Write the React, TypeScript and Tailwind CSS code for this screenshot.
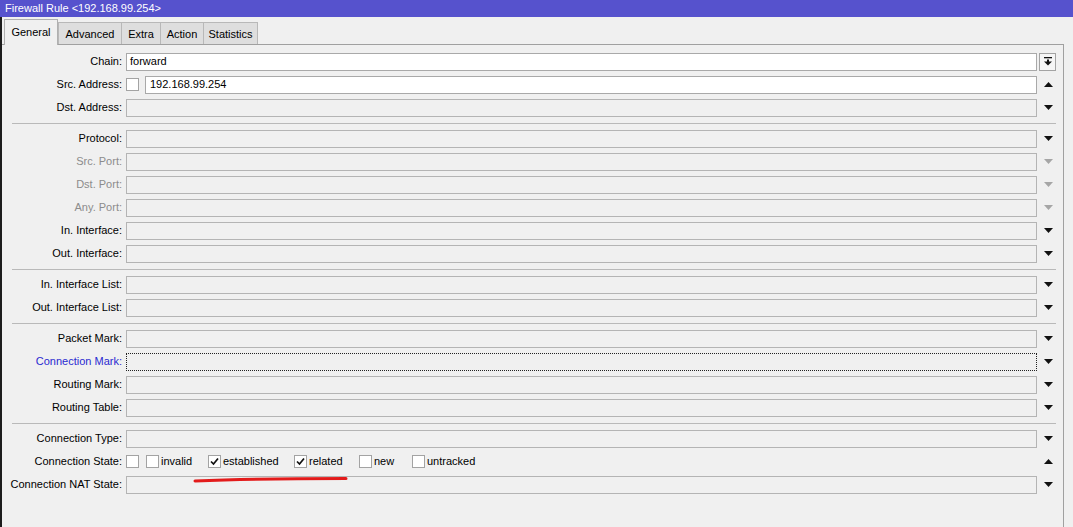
import React from "react";

type Field = {
  label: string;
  kind?: "input" | "white" | "src" | "focus" | "state";
  text?: string;
  arrow?: "down" | "up" | "grey" | "button";
  labelTone?: "normal" | "muted" | "blue";
};

const groups: Field[][] = [
  [
    { label: "Chain:", kind: "white", text: "forward", arrow: "button" },
    { label: "Src. Address:", kind: "src", text: "192.168.99.254", arrow: "up" },
    { label: "Dst. Address:", arrow: "down" },
  ],
  [
    { label: "Protocol:", arrow: "down" },
    { label: "Src. Port:", arrow: "grey", labelTone: "muted" },
    { label: "Dst. Port:", arrow: "grey", labelTone: "muted" },
    { label: "Any. Port:", arrow: "grey", labelTone: "muted" },
    { label: "In. Interface:", arrow: "down" },
    { label: "Out. Interface:", arrow: "down" },
  ],
  [
    { label: "In. Interface List:", arrow: "down" },
    { label: "Out. Interface List:", arrow: "down" },
  ],
  [
    { label: "Packet Mark:", arrow: "down" },
    { label: "Connection Mark:", kind: "focus", arrow: "down", labelTone: "blue" },
    { label: "Routing Mark:", arrow: "down" },
    { label: "Routing Table:", arrow: "down" },
  ],
  [
    { label: "Connection Type:", arrow: "down" },
    { label: "Connection State:", kind: "state", arrow: "up" },
    { label: "Connection NAT State:", arrow: "down" },
  ],
];

const states = [
  { name: "invalid", checked: false, w: "w-[62px]" },
  { name: "established", checked: true, w: "w-[86px]" },
  { name: "related", checked: true, w: "w-[65px]" },
  { name: "new", checked: false, w: "w-[53px]" },
  { name: "untracked", checked: false, w: "w-auto" },
];

const tabs = [
  { name: "Advanced", w: "w-[64px] border-l" },
  { name: "Extra", w: "w-[39px]" },
  { name: "Action", w: "w-[43px]" },
  { name: "Statistics", w: "w-[54px]" },
];

function Check({ checked }: { checked?: boolean }) {
  return (
    <span className="w-[13px] h-[13px] shrink-0 border border-[#a3a3a3] bg-white flex items-center justify-center">
      {checked && (
        <svg width="9" height="9" viewBox="0 0 9 9">
          <path d="M1 4.5 L3.5 7 L8 1.5" fill="none" stroke="#111" strokeWidth="1.7" />
        </svg>
      )}
    </span>
  );
}

function Arrow({ kind }: { kind?: Field["arrow"] }) {
  if (kind === "button") {
    return (
      <span className="ml-[2px] w-[17px] h-[18px] border border-[#a3a3a3] bg-[#f5f5f5] flex items-center justify-center">
        <svg width="8" height="9" viewBox="0 0 8 9">
          <rect x="0" y="0" width="8" height="1.3" fill="#111" />
          <rect x="3" y="2.5" width="2" height="2.5" fill="#111" />
          <polygon points="0,4.5 8,4.5 4,8.5" fill="#111" />
        </svg>
      </span>
    );
  }
  const up = kind === "up";
  const color = kind === "grey" ? "#a6a6a6" : "#111";
  return (
    <span className="pl-[7px] flex items-center">
      <svg width="9" height="5" viewBox="0 0 9 5">
        <polygon points={up ? "0,5 9,5 4.5,0" : "0,0 9,0 4.5,5"} fill={color} />
      </svg>
    </span>
  );
}

function Row({ f }: { f: Field }) {
  const tone =
    f.labelTone === "muted"
      ? "text-[#8c8c8c]"
      : f.labelTone === "blue"
      ? "text-[#2a2ad0]"
      : "text-black";
  const box = "h-[18px] flex items-center pl-[3px]";
  let body: React.ReactNode;
  if (f.kind === "white") {
    body = <div className={`flex-1 ${box} border border-[#a9a9a9] bg-white`}>{f.text}</div>;
  } else if (f.kind === "src") {
    body = (
      <div className="flex-1 flex items-center">
        <Check />
        <div className={`ml-[6px] flex-1 ${box} pl-[4px] border border-[#a9a9a9] bg-white`}>{f.text}</div>
      </div>
    );
  } else if (f.kind === "focus") {
    body = <div className={`flex-1 ${box} border border-dotted border-[#222] bg-[#f0f0f0]`} />;
  } else if (f.kind === "state") {
    body = (
      <div className="flex-1 flex items-center h-[18px]">
        <Check />
        <div className="ml-[7px] flex items-center">
          {states.map((s) => (
            <div key={s.name} className={`${s.w} flex items-center`}>
              <Check checked={s.checked} />
              <span className="ml-[2px]">{s.name}</span>
            </div>
          ))}
        </div>
      </div>
    );
  } else {
    body = <div className={`flex-1 ${box} border border-[#b4b4b4] bg-[#f0f0f0]`} />;
  }
  return (
    <div className="h-[23px] flex items-center">
      <div className={`w-[120px] shrink-0 text-right whitespace-nowrap ${tone}`}>{f.label}</div>
      <div className="ml-[4px] flex-1 flex">{body}</div>
      <div className="w-[26px] shrink-0 flex items-center">
        <Arrow kind={f.arrow} />
      </div>
    </div>
  );
}

export default function App() {
  return (
    <div className="relative w-[1073px] h-[527px] bg-[#f0f0f0] flex flex-col overflow-hidden font-['Liberation_Sans',Arial,sans-serif] text-[11px] leading-none text-black">
      <div className="h-[17px] shrink-0 bg-[#5652cd] text-white pl-[5px] flex items-center">
        Firewall Rule &lt;192.168.99.254&gt;
      </div>
      <div className="flex-1 flex border-l-2 border-[#1c1c1c]">
        <div className="w-[1062px] flex flex-col">
          {/* tab strip */}
          <div className="h-[27px] shrink-0 flex items-end pl-[2px]">
            <div className="relative z-10 -mb-px h-[26px] w-[54px] border border-b-0 border-[#b0b0b0] bg-[#f0f0f0] flex items-center justify-center">
              General
            </div>
            {tabs.map((t) => (
              <div
                key={t.name}
                className={`h-[22px] ${t.w} border-t border-r border-[#b8b8b8] bg-[#dedede] flex items-center justify-center pt-[1px]`}
              >
                {t.name}
              </div>
            ))}
          </div>
          {/* panel */}
          <div className="flex-1 border-t border-r border-[#a0a0a0] pt-[5px] flex flex-col">
            {groups.map((g, i) => (
              <React.Fragment key={i}>
                {i > 0 && (
                  <div className="h-[8px] ml-[10px] mr-[7px] flex items-center">
                    <div className="flex-1 h-px bg-[#b9b9b9]" />
                  </div>
                )}
                {g.map((f) => (
                  <Row key={f.label} f={f} />
                ))}
              </React.Fragment>
            ))}
          </div>
        </div>
      </div>
      {/* red annotation stroke */}
      <svg className="absolute left-[190px] top-[472px]" width="162" height="14" viewBox="0 0 162 14">
        <path d="M5 9 Q 70 6.5 156 6.5" fill="none" stroke="#e31b1b" strokeWidth="3" strokeLinecap="round" />
      </svg>
    </div>
  );
}
